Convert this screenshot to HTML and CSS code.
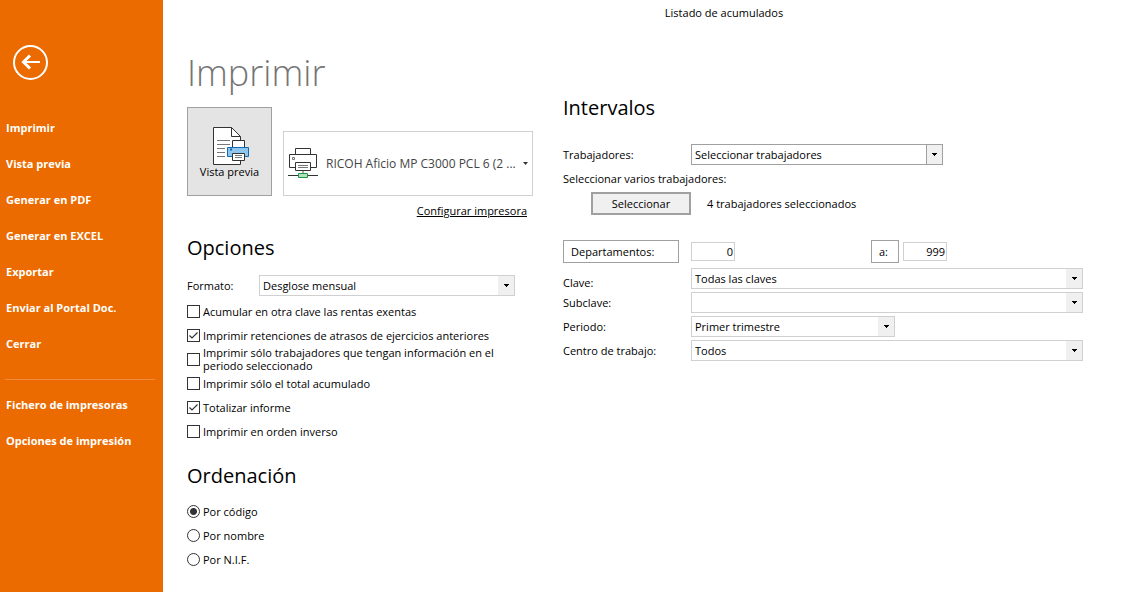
FILE: index.html
```html
<!DOCTYPE html>
<html lang="es">
<head>
<meta charset="utf-8">
<meta name="viewport" content="width=device-width, initial-scale=1">
<title>Listado de acumulados</title>
<link rel="stylesheet" href="styles.css">
</head>
<body>
<div class="app">
  <nav class="sidebar" aria-label="Acciones">
    <button class="back" type="button" aria-label="Volver">
      <svg width="36" height="36" viewBox="0 0 36 36" fill="none" stroke="#fff">
        <circle cx="18.500" cy="18.500" r="16.500" stroke-width="2"/>
        <path d="M11 18H28" stroke-width="2"/>
        <path d="M18 11.500L11.500 18L18 24.500" stroke-width="3"/>
      </svg>
    </button>
    <button class="nav-item" type="button">Imprimir</button>
    <button class="nav-item" type="button">Vista previa</button>
    <button class="nav-item" type="button">Generar en PDF</button>
    <button class="nav-item" type="button">Generar en EXCEL</button>
    <button class="nav-item" type="button">Exportar</button>
    <button class="nav-item" type="button">Enviar al Portal Doc.</button>
    <button class="nav-item" type="button">Cerrar</button>
    <hr class="nav-line">
    <button class="nav-item" type="button">Fichero de impresoras</button>
    <button class="nav-item" type="button">Opciones de impresión</button>
  </nav>

  <main class="main">
    <header class="title-bar">Listado de acumulados</header>
    <div class="columns">
      <div class="left">
        <h1 class="page-title">Imprimir</h1>
        <div class="print-row">
          <button class="preview" type="button">
            <svg width="37" height="39" viewBox="0 0 37 39" fill="none">
              <path d="M.5.500H18.500L27.500 9.500V37.500H.500Z" fill="#fff" stroke="#333"/>
              <path d="M18.500.500V9.500H27.500" stroke="#333"/>
              <path d="M4 13.500H17M4 17.500H17M4 21.500H12M4 25.500H12M4 29.500H12" stroke="#777"/>
              <path d="M19.500 20V13.500H31.500V20" fill="#fff" stroke="#333"/>
              <path d="M14.500 20.500H35.500V29.500H14.500Z" fill="#8fc6ee" stroke="#1568b0"/>
              <path d="M17 22.500H19" stroke="#1568b0" stroke-width="2"/>
              <path d="M19.500 26.500H31.500V33.500H19.500Z" fill="#fff" stroke="#333"/>
              <path d="M22 28.500H29M22 30.500H29" stroke="#777"/>
            </svg>
            <span>Vista previa</span>
          </button>
          <div class="printer">
            <svg width="30" height="31" viewBox="0 0 30 31" fill="none">
              <path d="M7.500 6.500V.500H22.500V6.500" fill="#fff" stroke="#333"/>
              <path d="M1.500 6.500H28.500V19.500H1.500Z" fill="#fff" stroke="#333"/>
              <path d="M4.500 9.500H6.500V11.500H4.500Z" stroke="#777"/>
              <path d="M7.500 14.500H22.500V22.500H7.500Z" fill="#fff" stroke="#333"/>
              <path d="M10 17.500H20M10 19.500H20" stroke="#777"/>
              <path d="M15 23V26" stroke="#aaa" stroke-width="2"/>
              <path d="M0 27.500H30" stroke="#333"/>
              <path d="M10.500 25.500H19.500V29.500H10.500Z" fill="#b5dfbd" stroke="#1a9a48"/>
            </svg>
            <select class="printer-select" aria-label="Impresora"><option>RICOH Aficio MP C3000 PCL 6 (2 ...</option></select>
          </div>
        </div>
        <a class="config" href="#">Configurar impresora</a>

        <h2 class="heading">Opciones</h2>
        <div class="format-row">
          <label for="formato">Formato:</label>
          <select class="combo" id="formato"><option>Desglose mensual</option></select>
        </div>
        <label class="check"><input type="checkbox">Acumular en otra clave las rentas exentas</label>
        <label class="check"><input type="checkbox" checked>Imprimir retenciones de atrasos de ejercicios anteriores</label>
        <label class="check"><input type="checkbox"><span>Imprimir sólo trabajadores que tengan información en el periodo seleccionado</span></label>
        <label class="check"><input type="checkbox">Imprimir sólo el total acumulado</label>
        <label class="check"><input type="checkbox" checked>Totalizar informe</label>
        <label class="check"><input type="checkbox">Imprimir en orden inverso</label>

        <h2 class="heading order">Ordenación</h2>
        <label class="check"><input type="radio" name="orden" checked>Por código</label>
        <label class="check"><input type="radio" name="orden">Por nombre</label>
        <label class="check"><input type="radio" name="orden">Por N.I.F.</label>
      </div>

      <div class="right">
        <h2 class="heading">Intervalos</h2>
        <div class="field workers">
          <label for="trab">Trabajadores:</label>
          <select class="combo dark" id="trab"><option>Seleccionar trabajadores</option></select>
        </div>
        <p class="several">Seleccionar varios trabajadores:</p>
        <div class="pick-row">
          <button class="pick" type="button">Seleccionar</button>
          <span>4 trabajadores seleccionados</span>
        </div>
        <div class="dept-row">
          <button class="box dept" type="button">Departamentos:</button>
          <input class="num from" type="text" value="0" aria-label="Departamento inicial">
          <button class="box to" type="button">a:</button>
          <input class="num" type="text" value="999" aria-label="Departamento final">
        </div>
        <div class="fields">
          <div class="field low"><label for="clave">Clave:</label><select class="combo" id="clave"><option>Todas las claves</option></select></div>
          <div class="field"><label for="subclave">Subclave:</label><select class="combo" id="subclave"><option></option></select></div>
          <div class="field period"><label for="periodo">Periodo:</label><select class="combo" id="periodo"><option>Primer trimestre</option></select></div>
          <div class="field"><label for="centro">Centro de trabajo:</label><select class="combo" id="centro"><option>Todos</option></select></div>
        </div>
      </div>
    </div>
  </main>
</div>
</body>
</html>
```
FILE: styles.css
```css
* { box-sizing: border-box; }
body, h1, h2, p { margin: 0; }
body, button, select, input {
  font-family: "Open Sans", "Noto Sans", sans-serif;
  font-size: 11px;
  color: #000;
}
body { background: #fff; line-height: 13px; }
button, select, input { margin: 0; border-radius: 0; }

.app { display: flex; min-height: 100vh; }

.sidebar {
  flex: 0 0 163px;
  display: flex;
  flex-direction: column;
  align-items: stretch;
  padding-top: 44px;
  background: #eb6b00;
}
.back {
  align-self: flex-start;
  margin: 0 0 29px 12px;
  padding: 0;
  border: 0;
  background: none;
}
.back svg { display: block; }
.nav-item {
  height: 36px;
  padding: 0 6px;
  border: 0;
  background: none;
  color: #fff;
  font-weight: 700;
  text-align: left;
}
.nav-line {
  height: 1px;
  margin: 18px 8px 6px 5px;
  border: 0;
  background: #f18c3a;
}

.main { flex: 1; min-width: 0; padding: 0 38px 16px 24px; }
.title-bar {
  height: 26px;
  padding-left: 178px;
  line-height: 26px;
  text-align: center;
}
.columns { display: flex; gap: 30px; }
.left { flex: 0 0 346px; min-width: 0; padding-top: 22px; }
.right { flex: 1; min-width: 0; padding-top: 67px; }

.page-title {
  margin-bottom: 9px;
  color: #757575;
  font-size: 36px;
  font-weight: 300;
  line-height: 50px;
}
.heading { font-size: 20px; font-weight: 400; line-height: 30px; }

.print-row { display: flex; align-items: flex-end; gap: 11px; }
.preview {
  flex: none;
  width: 85px;
  height: 89px;
  display: flex;
  flex-direction: column;
  align-items: center;
  padding: 19px 0 0;
  border: 1px solid #a0a0a0;
  background: #e4e4e4;
  line-height: 12px;
}
.preview svg { margin-left: 4px; }
.printer {
  flex: 1;
  min-width: 0;
  height: 65px;
  display: flex;
  align-items: center;
  padding: 0 3px 0 4px;
  border: 1px solid #d0d0d0;
}
.printer svg { flex: none; }
.printer-select {
  flex: 1;
  min-width: 0;
  height: 63px;
  padding: 0 12px 0 8px;
  border: 0;
  appearance: none;
  background: url("data:image/svg+xml,%3Csvg xmlns='http://www.w3.org/2000/svg' width='5' height='3'%3E%3Cpath d='M0 0H5L2.500 3Z' fill='%23333'/%3E%3C/svg%3E") right 1px center no-repeat;
  color: #444;
  font-size: 12px;
}
.config {
  display: block;
  margin: 8px 6px 15px 0;
  color: #000;
  font-size: 11px;
  line-height: 14px;
  text-align: right;
}

.combo {
  height: 21px;
  width: 100%;
  padding: 0 18px 0 3px;
  border: 1px solid #d0d0d0;
  appearance: none;
  background:
    url("data:image/svg+xml,%3Csvg xmlns='http://www.w3.org/2000/svg' width='5' height='3'%3E%3Cpath d='M0 0H5V1H4V2H3V3H2V2H1V1H0Z'/%3E%3C/svg%3E") right 5px center no-repeat,
    linear-gradient(#f0f0f0, #f0f0f0) right / 16px 100% no-repeat,
    #fff;
}
.combo.dark {
  border-color: #a0a0a0;
  background:
    url("data:image/svg+xml,%3Csvg xmlns='http://www.w3.org/2000/svg' width='5' height='3'%3E%3Cpath d='M0 0H5V1H4V2H3V3H2V2H1V1H0Z'/%3E%3C/svg%3E") right 5px center no-repeat,
    linear-gradient(to right, #a0a0a0 1px, #f0f0f0 1px) right / 16px 100% no-repeat,
    #fff;
}
.format-row {
  display: grid;
  grid-template-columns: 72px 256px;
  align-items: center;
  margin: 12px 0 3px;
}

.check {
  display: flex;
  align-items: center;
  gap: 3px;
  height: 24px;
}
.check input {
  flex: none;
  width: 13px;
  height: 13px;
  border: 1px solid #333;
  appearance: none;
  background: #fff center no-repeat;
}
.check input[type="checkbox"]:checked {
  background-image: url("data:image/svg+xml,%3Csvg xmlns='http://www.w3.org/2000/svg' width='11' height='11'%3E%3Cpath d='M1.500 5.500L4 8L9.500 2.500' fill='none' stroke='%23333' stroke-width='1.200'/%3E%3C/svg%3E");
}
.check input[type="radio"] { border-radius: 50%; }
.check input[type="radio"]:checked {
  background-image: radial-gradient(circle, #333 3px, transparent 4px);
}
.order { margin: 18px 0 8px; }

.field {
  display: grid;
  grid-template-columns: 128px 1fr;
  align-items: center;
}
.workers { grid-template-columns: 128px 252px; margin-top: 21px; }
.several { margin: 7px 0; }
.pick-row { display: flex; align-items: center; gap: 16px; padding-left: 28px; }
.pick {
  width: 100px;
  height: 23px;
  padding: 0;
  border: 2px solid #a0a0a0;
  background: #f0f0f0;
}
.dept-row { display: flex; align-items: center; margin: 25px 0 5px; }
.box {
  height: 23px;
  padding: 0 7px;
  border: 1px solid #a0a0a0;
  background: #fff;
  text-align: left;
}
.dept { width: 116px; margin-right: 12px; }
.to { width: 28px; margin-right: 4px; }
.num {
  width: 44px;
  height: 19px;
  padding: 0 1px;
  border: 1px solid #d0d0d0;
  text-align: right;
}
.from { margin-right: 136px; }
.fields { display: grid; gap: 3px; }
.low label { padding-top: 8px; }
.period { grid-template-columns: 128px 204px; }
```
